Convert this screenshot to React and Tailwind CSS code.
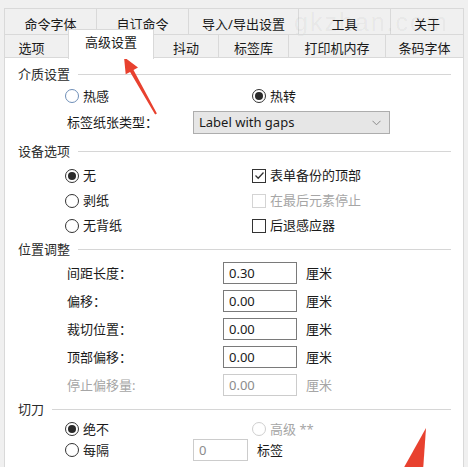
const Radio = ({ checked, disabled, hover, label }) => (
  <div className="flex items-center gap-[4px]">
    <span
      className={`w-[14px] h-[14px] rounded-full border bg-white flex items-center justify-center
        ${disabled ? 'border-[#cfcfcf]' : hover ? 'border-[#6f8fb8]' : 'border-[#333]'}`}>
      {checked && <span className="w-[8px] h-[8px] rounded-full bg-[#2a2a2a]" />}
    </span>
    <span className={disabled ? 'text-[#a6a6a6]' : 'text-[#1a1a1a]'}>{label}</span>
  </div>
);

const Check = ({ checked, disabled, label }) => (
  <div className="flex items-center gap-[4px]">
    <span
      className={`w-[14px] h-[14px] border bg-white flex items-center justify-center
        ${disabled ? 'border-[#d4d4d4]' : 'border-[#333]'}`}>
      {checked && (
        <svg width="11" height="11" viewBox="0 0 11 11">
          <polyline points="1.5,5.5 4.2,8.2 9.5,2.5" fill="none" stroke="#333" strokeWidth="1.3" />
        </svg>
      )}
    </span>
    <span className={disabled ? 'text-[#a6a6a6]' : 'text-[#1a1a1a]'}>{label}</span>
  </div>
);

const Group = ({ title }) => (
  <div className="flex items-center h-[20px] pl-[13px] pr-[12px]">
    <span className="text-[#2b2b2b]">{title}</span>
    <div className="flex-1 h-px bg-[#d6d6d6] ml-[8px]" />
  </div>
);

const Tab = ({ label, w, className = '' }) => (
  <div
    className={`flex justify-center border border-[#d9d9d9] -ml-px first:ml-0 text-[#1a1a1a] ${className}`}
    style={{ width: w }}>
    {label}
  </div>
);

const offsets = [
  { label: '间距长度：', value: '0.30' },
  { label: '偏移：', value: '0.00' },
  { label: '裁切位置：', value: '0.00' },
  { label: '顶部偏移：', value: '0.00' },
];

export default function App() {
  return (
    <div className="relative w-[468px] h-[467px] overflow-hidden bg-[#f0f0f0] text-[13px] leading-none font-['Noto_Sans','Noto_Sans_CJK_SC',sans-serif]">
      {/* tabs */}
      <div className="pt-[8px] pl-[4px]">
        <div className="flex h-[27px]">
          <Tab label="命令字体" w={93} className="items-center pt-[5px]" />
          <Tab label="自订命令" w={93} className="items-center pt-[5px]" />
          <Tab label="导入/导出设置" w={111} className="items-center pt-[5px]" />
          <Tab label="工具" w={93} className="items-center pt-[5px]" />
          <Tab label="关于" w={74} className="items-center pt-[5px]" />
        </div>
        <div className="flex h-[24px] -mt-px relative z-10">
          <Tab label="选项" w={65} className="items-center pt-[4px] pr-[10px]" />
          <div className="w-[86px] h-[30px] -mt-[5px] -ml-px bg-white border border-b-0 border-[#d9d9d9] flex justify-center pt-[6px] text-[#1a1a1a]">
            高级设置
          </div>
          <Tab label="抖动" w={66} className="items-center pt-[4px]" />
          <Tab label="标签库" w={71} className="items-center pt-[4px]" />
          <Tab label="打印机内存" w={98} className="items-center pt-[4px]" />
          <Tab label="条码字体" w={79} className="items-center pt-[4px]" />
        </div>
      </div>

      {/* panel */}
      <div className="ml-[4px] -mt-px w-[460px] h-[420px] bg-white border border-[#d9d9d9] pt-[6px]">
        <Group title="介质设置" />
        <div className="flex items-center h-[24px] pl-[60px]">
          <div className="w-[187px]"><Radio hover label="热感" /></div>
          <Radio checked label="热转" />
        </div>
        <div className="flex items-center h-[26px] pt-[3px] pl-[62px]">
          <span className="w-[126px] text-[#1a1a1a]">标签纸张类型：</span>
          <div className="w-[197px] h-[23px] bg-[#e6e6e6] border border-[#adadad] flex items-center justify-between pl-[5px] pr-[8px] text-[#1a1a1a]">
            <span>Label with gaps</span>
            <svg width="9" height="6" viewBox="0 0 9 6">
              <polyline points="0.5,0.8 4.5,4.8 8.5,0.8" fill="none" stroke="#8a8a8a" strokeWidth="1" />
            </svg>
          </div>
        </div>

        <div className="mt-[7px]"><Group title="设备选项" /></div>
        <div className="mt-[2px]">
          <div className="flex items-center h-[25px] pl-[60px]">
            <div className="w-[187px]"><Radio checked label="无" /></div>
            <Check checked label="表单备份的顶部" />
          </div>
          <div className="flex items-center h-[25px] pl-[60px]">
            <div className="w-[187px]"><Radio label="剥纸" /></div>
            <Check disabled label="在最后元素停止" />
          </div>
          <div className="flex items-center h-[25px] pl-[60px]">
            <div className="w-[187px]"><Radio label="无背纸" /></div>
            <Check label="后退感应器" />
          </div>
        </div>

        <div className="mt-[1px]"><Group title="位置调整" /></div>
        {offsets.map((o) => (
          <div key={o.label} className="flex items-center h-[28px] pl-[62px]">
            <span className="w-[156px] text-[#1a1a1a]">{o.label}</span>
            <div className="w-[74px] h-[22px] border border-[#7a7a7a] flex items-center pl-[5px] text-[#1a1a1a]">
              {o.value}
            </div>
            <span className="ml-[9px] text-[#1a1a1a]">厘米</span>
          </div>
        ))}
        <div className="flex items-center h-[28px] pl-[62px]">
          <span className="w-[156px] text-[#a6a6a6]">停止偏移量:</span>
          <div className="w-[74px] h-[22px] border border-[#cccccc] flex items-center pl-[5px] text-[#8c8c8c]">
            0.00
          </div>
          <span className="ml-[9px] text-[#a6a6a6]">厘米</span>
        </div>

        <Group title="切刀" />
        <div className="flex items-center h-[20px] pl-[60px]">
          <div className="w-[187px]"><Radio checked label="绝不" /></div>
          <Radio disabled label="高级 **" />
        </div>
        <div className="flex items-center h-[20px] pl-[60px] pt-[2px]">
          <div className="w-[128px]"><Radio label="每隔" /></div>
          <div className="w-[55px] h-[22px] border border-[#cccccc] flex items-center pl-[5px] text-[#8c8c8c]">0</div>
          <span className="ml-[9px] text-[#1a1a1a]">标签</span>
        </div>
      </div>

      {/* watermark */}
      <div className="absolute left-[294px] top-[10px] text-[25px] tracking-[2px] text-black/[0.05] font-['Liberation_Sans',sans-serif] pointer-events-none">
        gkzhan.com
      </div>

      {/* annotation arrows */}
      <svg className="absolute inset-0 pointer-events-none" width="468" height="467">
        <polygon points="124,57 138,67.5 133.5,69.9 156.9,113.5 155.1,114.5 130.1,71.9 125.7,74.3" fill="#e8412f" />
        <polygon points="426,428 402,471 423,471" fill="#e8412f" />
      </svg>
    </div>
  );
}
